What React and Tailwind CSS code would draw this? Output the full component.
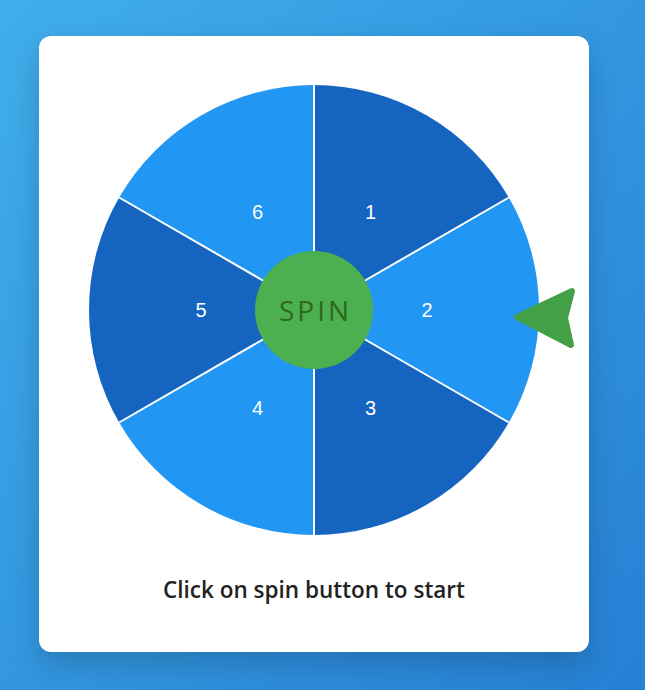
import { useState } from "react"

const SEGMENTS = [1, 2, 3, 4, 5, 6]
const R = 225

function pt(deg, r) {
    const a = (deg * Math.PI) / 180
    return [R + r * Math.sin(a), R - r * Math.cos(a)]
}

function Wheel({ rotation }) {
    return (
        <svg width="450" height="450" viewBox="0 0 450 450" style={{ transform: `rotate(${rotation}deg)` }}>
            {SEGMENTS.map((n, i) => {
                const [x1, y1] = pt(i * 60, R)
                const [x2, y2] = pt(i * 60 + 60, R)
                return (
                    <path
                        key={n}
                        d={`M${R} ${R} L${x1} ${y1} A${R} ${R} 0 0 1 ${x2} ${y2} Z`}
                        fill={i % 2 === 0 ? "#1565c0" : "#2196f3"}
                    />
                )
            })}
            {SEGMENTS.map((n, i) => {
                const [x, y] = pt(i * 60, R)
                return <line key={n} x1={R} y1={R} x2={x} y2={y} stroke="#fff" strokeWidth="2" />
            })}
            {SEGMENTS.map((n, i) => {
                const [x, y] = pt(i * 60 + 30, 113)
                return (
                    <text
                        key={n}
                        x={x}
                        y={y}
                        fill="#fff"
                        fontSize="20"
                        fontFamily="Liberation Sans, Arial, sans-serif"
                        textAnchor="middle"
                        dominantBaseline="central"
                    >
                        {n}
                    </text>
                )
            })}
        </svg>
    )
}

export default function App() {
    const [rotation, setRotation] = useState(0)

    return (
        <main className="min-h-screen bg-gradient-to-br from-[#40aeeb] to-[#2680d4] pt-9 pl-[39px]">
            <div className="relative w-[550px] bg-white rounded-xl shadow-[0_12px_30px_rgba(0,0,0,0.18)] pt-[49px] pb-[47px] flex flex-col items-center">
                <div className="relative w-[450px] h-[450px]">
                    <Wheel rotation={rotation} />
                    <button
                        onClick={() => setRotation(r => r + 720 + Math.floor(Math.random() * 360))}
                        className="absolute left-[166px] top-[166px] w-[118px] h-[118px] rounded-full bg-[#4caf50] text-[#2f6a1c] text-[28px] tracking-[3px] font-['Open_Sans',sans-serif] flex items-center justify-center pl-[3px]"
                    >
                        SPIN
                    </button>
                </div>
                <svg className="absolute left-[472px] top-[249px]" width="72" height="66" viewBox="0 0 72 66">
                    <path
                        d="M6 32 L61 6 L54 33 L60 60 Z"
                        fill="#43a047"
                        stroke="#43a047"
                        strokeWidth="6"
                        strokeLinejoin="round"
                    />
                </svg>
                <p className="mt-10 text-[22.5px] leading-[30px] text-[#222] font-semibold font-['Open_Sans',sans-serif]">
                    Click on spin button to start
                </p>
            </div>
        </main>
    )
}
